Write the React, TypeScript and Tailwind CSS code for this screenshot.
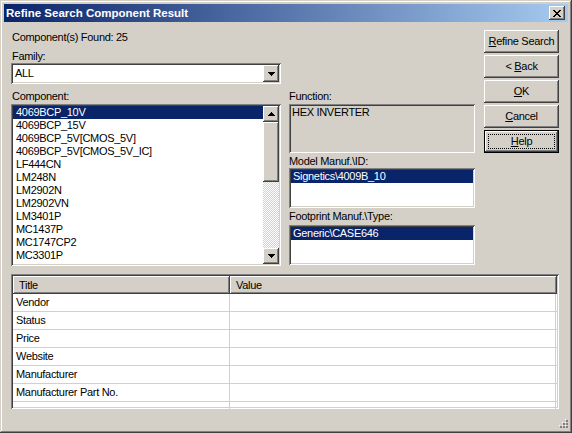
import React from "react";

const raised =
  "shadow-[inset_-1px_-1px_#404040,inset_1px_1px_#ffffff,inset_-2px_-2px_#808080,inset_2px_2px_#d4d0c8]";
const sunken =
  "shadow-[inset_1px_1px_#808080,inset_-1px_-1px_#ffffff,inset_2px_2px_#404040,inset_-2px_-2px_#d4d0c8]";

function Arrow({ up }: { up?: boolean }) {
  return (
    <svg width="7" height="4" viewBox="0 0 7 4" shapeRendering="crispEdges" className={up ? "rotate-180" : ""}>
      <path d="M0 0h7v1H0z M1 1h5v1H1z M2 2h3v1H2z M3 3h1v1H3z" fill="#000" />
    </svg>
  );
}

function ScrollBtn({ up }: { up?: boolean }) {
  return (
    <div className={`w-[16px] h-[16px] shrink-0 bg-[#d4d0c8] flex items-center justify-center ${raised}`}>
      <Arrow up={up} />
    </div>
  );
}

function Btn({ children, def }: { children: React.ReactNode; def?: boolean }) {
  if (def) {
    return (
      <div className="w-[75px] h-[23px] border border-black bg-[#d4d0c8] shadow-[inset_-1px_-1px_#404040,inset_1px_1px_#ffffff,inset_-2px_-2px_#808080] p-[3px]">
        <div className="w-full h-full border border-dotted border-black flex items-center justify-center leading-[13px]">
          {children}
        </div>
      </div>
    );
  }
  return (
    <div className={`w-[75px] h-[23px] bg-[#d4d0c8] flex items-center justify-center leading-[13px] ${raised}`}>
      {children}
    </div>
  );
}

const items = [
  "4069BCP_10V",
  "4069BCP_15V",
  "4069BCP_5V[CMOS_5V]",
  "4069BCP_5V[CMOS_5V_IC]",
  "LF444CN",
  "LM248N",
  "LM2902N",
  "LM2902VN",
  "LM3401P",
  "MC1437P",
  "MC1747CP2",
  "MC3301P",
];

const rows = ["Vendor", "Status", "Price", "Website", "Manufacturer", "Manufacturer Part No.", ""];

export default function App() {
  return (
    <div
      className={`relative w-[572px] h-[433px] bg-[#d4d0c8] p-[4px] flex flex-col text-[11px] tracking-[-0.3px] text-black font-['Liberation_Sans',Arial,sans-serif] shadow-[inset_-1px_-1px_#404040,inset_1px_1px_#d4d0c8,inset_-2px_-2px_#808080,inset_2px_2px_#ffffff]`}
    >
      {/* Title bar */}
      <div className="h-[18px] shrink-0 flex items-center bg-[linear-gradient(to_right,#0a246a,#a6caf0)] pl-[2px] pr-[3px]">
        <div className="flex-1 text-white font-bold text-[11.5px] tracking-normal leading-[18px]">
          Refine Search Component Result
        </div>
        <div className={`w-[16px] h-[14px] bg-[#d4d0c8] flex items-center justify-center ${raised}`}>
          <svg width="8" height="7" viewBox="0 0 8 7" shapeRendering="crispEdges">
            <path
              d="M0 0h2v1H0z M6 0h2v1H6z M1 1h2v1H1z M5 1h2v1H5z M2 2h4v1H2z M3 3h2v1H3z M2 4h4v1H2z M1 5h2v1H1z M5 5h2v1H5z M0 6h2v1H0z M6 6h2v1H6z"
              fill="#000"
            />
          </svg>
        </div>
      </div>

      {/* Top area */}
      <div className="flex pl-[7px] shrink-0">
        {/* Left column */}
        <div className="w-[270px] flex flex-col pt-[9px]">
          <div className="leading-[13px] pl-[1px]">Component(s) Found: 25</div>
          <div className="leading-[13px] mt-[6px] pl-[1px]">Family:</div>
          <div className={`h-[21px] bg-white p-[2px] flex ${sunken}`}>
            <div className="flex-1 leading-[17px] pl-[2px]">ALL</div>
            <div className={`w-[16px] h-[17px] bg-[#d4d0c8] flex items-center justify-center ${raised}`}>
              <Arrow />
            </div>
          </div>
          <div className="leading-[13px] mt-[6px] pl-[1px]">Component:</div>
          <div className={`mt-[1px] h-[162px] bg-white p-[2px] flex ${sunken}`}>
            <div className="flex-1 flex flex-col">
              {items.map((it, i) => (
                <div
                  key={it}
                  className={`h-[13px] leading-[13px] pl-[3px] ${i === 0 ? "bg-[#0a246a] text-white" : ""}`}
                >
                  {it}
                </div>
              ))}
            </div>
            <div className="w-[16px] flex flex-col">
              <ScrollBtn up />
              <div className={`h-[60px] shrink-0 bg-[#d4d0c8] ${raised}`} />
              <div className="flex-1 bg-[image:repeating-conic-gradient(#ffffff_0%_25%,#d4d0c8_0%_50%)] bg-[length:2px_2px]" />
              <ScrollBtn />
            </div>
          </div>
        </div>

        {/* Middle column */}
        <div className="w-[186px] ml-[8px] flex flex-col pt-[68px]">
          <div className="leading-[13px]">Function:</div>
          <div className={`mt-[1px] h-[49px] bg-[#d4d0c8] p-[2px] ${sunken}`}>
            <div className="leading-[13px] pl-[1px]">HEX INVERTER</div>
          </div>
          <div className="leading-[13px] mt-[2px]">Model Manuf.\ID:</div>
          <div className={`h-[40px] bg-white p-[2px] ${sunken}`}>
            <div className="h-[13px] leading-[13px] pl-[2px] bg-[#0a246a] text-white">Signetics\4009B_10</div>
          </div>
          <div className="leading-[13px] mt-[2px]">Footprint Manuf.\Type:</div>
          <div className={`mt-[2px] h-[40px] bg-white p-[2px] ${sunken}`}>
            <div className="h-[13px] leading-[13px] pl-[2px] bg-[#0a246a] text-white">Generic\CASE646</div>
          </div>
        </div>

        {/* Buttons */}
        <div className="ml-[9px] pt-[8px] flex flex-col gap-[2px]">
          <Btn>
            <span>
              <u>R</u>efine Search
            </span>
          </Btn>
          <Btn>
            <span>
              &lt; <u>B</u>ack
            </span>
          </Btn>
          <Btn>
            <span>
              <u>O</u>K
            </span>
          </Btn>
          <Btn>
            <span>
              <u>C</u>ancel
            </span>
          </Btn>
          <Btn def>
            <span>
              <u>H</u>elp
            </span>
          </Btn>
        </div>
      </div>

      {/* Table */}
      <div className={`mt-[8px] ml-[7px] w-[548px] h-[135px] shrink-0 bg-white p-[2px] flex flex-col overflow-hidden ${sunken}`}>
        <div className="flex h-[18px] shrink-0">
          <div className={`w-[217px] bg-[#d4d0c8] pl-[6px] leading-[18px] ${raised}`}>Title</div>
          <div className={`flex-1 bg-[#d4d0c8] pl-[6px] leading-[18px] ${raised}`}>Value</div>
        </div>
        {rows.map((r, i) => (
          <div key={i} className="flex h-[18px] shrink-0 border-b border-[#d4d0c8]">
            <div className="w-[217px] border-r border-[#d4d0c8] pl-[3px] leading-[17px]">{r}</div>
            <div className="flex-1 border-r border-[#d4d0c8] mr-[1px]" />
          </div>
        ))}
      </div>

      {/* Size grip */}
      <div className="absolute right-[4px] bottom-[4px]">
        <svg width="12" height="12" viewBox="0 0 12 12" shapeRendering="crispEdges">
          <g fill="#ffffff">
            <rect x="9" y="2" width="1" height="1" />
            <rect x="6" y="5" width="1" height="1" />
            <rect x="9" y="5" width="1" height="1" />
            <rect x="3" y="8" width="1" height="1" />
            <rect x="6" y="8" width="1" height="1" />
            <rect x="9" y="8" width="1" height="1" />
          </g>
          <g fill="#808080">
            <rect x="10" y="3" width="2" height="2" />
            <rect x="7" y="6" width="2" height="2" />
            <rect x="10" y="6" width="2" height="2" />
            <rect x="4" y="9" width="2" height="2" />
            <rect x="7" y="9" width="2" height="2" />
            <rect x="10" y="9" width="2" height="2" />
          </g>
        </svg>
      </div>
    </div>
  );
}
